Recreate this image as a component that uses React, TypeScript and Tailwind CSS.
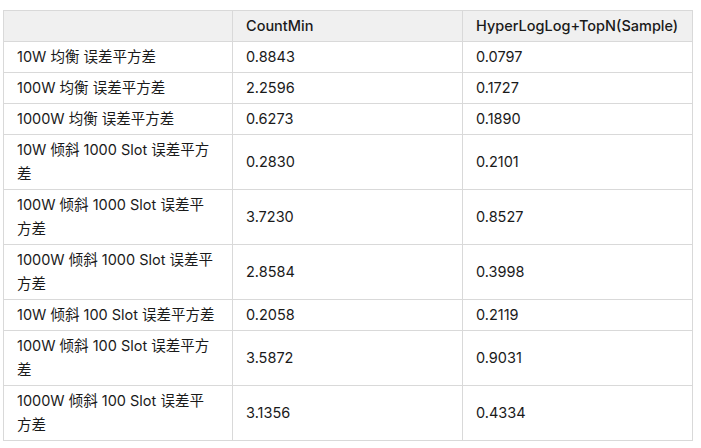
import React from 'react';

type Row = {
  label: string[];
  countMin: string;
  hll: string;
};

const rows: Row[] = [
  { label: ['10W 均衡 误差平方差'], countMin: '0.8843', hll: '0.0797' },
  { label: ['100W 均衡 误差平方差'], countMin: '2.2596', hll: '0.1727' },
  { label: ['1000W 均衡 误差平方差'], countMin: '0.6273', hll: '0.1890' },
  { label: ['10W 倾斜 1000 Slot 误差平方', '差'], countMin: '0.2830', hll: '0.2101' },
  { label: ['100W 倾斜 1000 Slot 误差平', '方差'], countMin: '3.7230', hll: '0.8527' },
  { label: ['1000W 倾斜 1000 Slot 误差平', '方差'], countMin: '2.8584', hll: '0.3998' },
  { label: ['10W 倾斜 100 Slot 误差平方差'], countMin: '0.2058', hll: '0.2119' },
  { label: ['100W 倾斜 100 Slot 误差平方', '差'], countMin: '3.5872', hll: '0.9031' },
  { label: ['1000W 倾斜 100 Slot 误差平', '方差'], countMin: '3.1356', hll: '0.4334' },
];

const cell = 'border border-[#d9d9d9] px-[13px] py-[3px] align-middle';

const App: React.FC = () => {
  return (
    <div
      className="min-h-screen bg-white pl-[3px] pt-[10px] text-[14.5px] leading-6 text-[#1a1a1a]"
      style={{ fontFamily: 'Inter, "Noto Sans CJK SC", sans-serif' }}
    >
      <table className="w-[690px] table-fixed border-collapse">
        <thead>
          <tr className="bg-[#f0f0f0]">
            <th className={`${cell} w-[229px] text-left font-medium`}></th>
            <th className={`${cell} w-[230px] text-left font-medium`}>CountMin</th>
            <th className={`${cell} text-left font-medium`}>HyperLogLog+TopN(Sample)</th>
          </tr>
        </thead>
        <tbody>
          {rows.map((r, i) => (
            <tr key={i}>
              <td className={cell}>
                {r.label.map((line, j) => (
                  <span key={j} className="block whitespace-nowrap">
                    {line}
                  </span>
                ))}
              </td>
              <td className={cell}>{r.countMin}</td>
              <td className={cell}>{r.hll}</td>
            </tr>
          ))}
        </tbody>
      </table>
    </div>
  );
};

export default App;
